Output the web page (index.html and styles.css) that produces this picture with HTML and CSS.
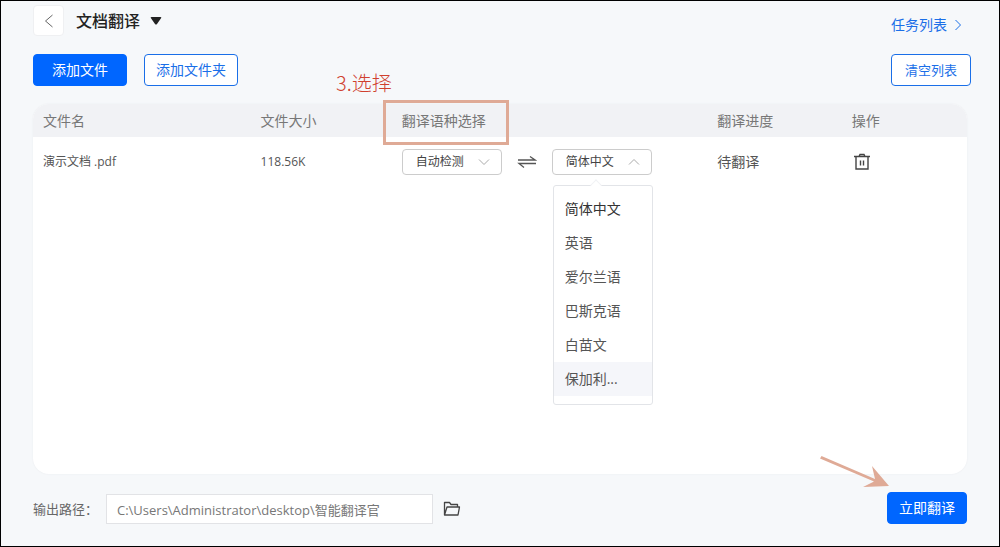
FILE: index.html
```html
<!DOCTYPE html>
<html lang="zh-CN">
<head>
<meta charset="utf-8">
<title>文档翻译</title>
<link rel="stylesheet" href="styles.css">
</head>
<body>
<div class="app">
  <header class="topbar">
    <button class="back" type="button" aria-label="返回">
      <svg width="10" height="14" viewBox="0 0 10 14"><path d="M8.500 1L1.500 7l7 6"/></svg>
    </button>
    <button class="title" type="button">文档翻译
      <svg width="12" height="8" viewBox="0 0 12 8"><path d="M1.500 0h9q1.500 0 .5 1.200L7 7q-1 1.200-2 0L1 1.200Q0 0 1.500 0z"/></svg>
    </button>
    <a class="tasks" href="#">任务列表
      <svg width="8" height="12" viewBox="0 0 8 12"><path d="M1.500 1L6.500 6l-5 5"/></svg>
    </a>
  </header>

  <div class="toolbar">
    <button class="btn btn-primary" type="button">添加文件</button>
    <button class="btn btn-outline" type="button">添加文件夹</button>
    <button class="btn btn-outline btn-clear" type="button">清空列表</button>
    <span class="note">3.选择</span>
  </div>

  <main class="card">
    <table class="files">
      <colgroup><col class="c-name"><col class="c-size"><col class="c-lang"><col class="c-progress"><col class="c-action"></colgroup>
      <thead>
        <tr><th>文件名</th><th>文件大小</th><th class="marked">翻译语种选择</th><th>翻译进度</th><th>操作</th></tr>
      </thead>
      <tbody>
        <tr>
          <td class="small">演示文档 .pdf</td>
          <td class="small">118.56K</td>
          <td>
            <div class="langs">
              <div class="picker">
                <select aria-label="源语言"><option>自动检测</option></select>
                <svg width="12" height="8" viewBox="0 0 12 8"><path d="M1 1.500l5 5 5-5"/></svg>
              </div>
              <svg class="swap" width="20" height="14" viewBox="0 0 20 14"><path d="M1 5h17L13 1.500M19 8.500H2L7 12.500"/></svg>
              <div class="picker">
                <select aria-label="目标语言"><option>简体中文</option></select>
                <svg width="12" height="8" viewBox="0 0 12 8"><path d="M1 6.500l5-5 5 5"/></svg>
                <ul class="menu" role="listbox" aria-label="目标语言">
                  <li role="option" aria-selected="true">简体中文</li>
                  <li role="option">英语</li>
                  <li role="option">爱尔兰语</li>
                  <li role="option">巴斯克语</li>
                  <li role="option">白苗文</li>
                  <li class="hover" role="option">保加利...</li>
                </ul>
              </div>
            </div>
          </td>
          <td>待翻译</td>
          <td>
            <button class="icon" type="button" aria-label="删除">
              <svg width="20" height="20" viewBox="0 0 20 20" stroke-width="1.400"><path d="M2 4.500h16M4 4.500v12.500h12V4.500M7 4.500l1-2h4l1 2M8.500 8.500v5M11.500 8.500v5"/></svg>
            </button>
          </td>
        </tr>
      </tbody>
    </table>
  </main>

  <footer class="footer">
    <label for="path">输出路径：</label>
    <input id="path" type="text" value="C:\Users\Administrator\desktop\智能翻译官">
    <button class="icon" type="button" aria-label="选择文件夹">
      <svg width="18" height="16" viewBox="0 0 18 16" stroke-width="1.300" stroke-linejoin="round"><path d="M1.500 14V1.500H6.500L8 3.500h6.500V6M1.500 14L4 6h12.500L15 14z"/></svg>
    </button>
    <div class="submit">
      <button class="btn btn-primary btn-start" type="button">立即翻译</button>
      <svg class="arrow" width="70" height="34" viewBox="0 0 70 34"><path d="M1.500 0L0 2.500 54 25.500 43 31l26-1L52 10l3 13z"/></svg>
    </div>
  </footer>
</div>
</body>
</html>
```
FILE: styles.css
```css
*, *::before, *::after { box-sizing: border-box; }

body {
  margin: 0;
  font-family: "Open Sans", "Noto Sans CJK SC", sans-serif;
  font-size: 14px;
  line-height: 20px;
  color: #555;
}

button, input, select { font: inherit; color: inherit; }

button {
  padding: 0;
  border: 0;
  background: none;
  cursor: pointer;
}

svg { fill: none; stroke: currentColor; }

.app {
  display: flex;
  flex-direction: column;
  min-height: 100vh;
  padding: 4px 32px 22px;
  border: 1px solid #000;
  background: #f6f8fa;
}

.topbar {
  display: flex;
  align-items: center;
  gap: 12px;
  padding-right: 5px;
}

.back {
  display: grid;
  place-items: center;
  width: 31px;
  height: 31px;
  border: 1px solid #eff0f2;
  border-radius: 4px;
  background: #fff;
  color: #666;
}

.title {
  display: flex;
  align-items: center;
  gap: 10px;
  font-size: 16px;
  font-weight: 500;
  color: #222;
}

.title svg { fill: currentColor; stroke: none; }

.tasks {
  display: flex;
  align-items: center;
  gap: 7px;
  margin: 8px 0 0 auto;
  color: #1a6fe8;
  text-decoration: none;
}

.toolbar {
  position: relative;
  display: flex;
  gap: 17px;
  margin: 18px -4px 18px 0;
}

.btn {
  width: 94px;
  height: 32px;
  border: 1px solid #0066ff;
  border-radius: 4px;
}

.btn-primary { background: #0066ff; color: #fff; }
.btn-outline { border-color: #1a6fe8; background: #fff; color: #1a6fe8; }
.btn-clear { width: 80px; margin-left: auto; font-size: 13px; }
.btn-start { width: 80px; }

.note {
  position: absolute;
  top: 15px;
  left: 303px;
  font-family: "Noto Sans CJK SC", sans-serif;
  font-size: 20px;
  font-weight: 300;
  line-height: 28px;
  color: #d0402e;
}

.card {
  flex: 1;
  border-radius: 16px;
  background: #fff;
  box-shadow: 0 0 2px #e9ebee;
}

.files {
  width: 100%;
  table-layout: fixed;
  border-collapse: separate;
  border-spacing: 0;
}

.c-name { width: 23.3%; }
.c-size { width: 15.1%; }
.c-lang { width: 33.8%; }
.c-progress { width: 14.4%; }
.c-action { width: 13.4%; }

th {
  height: 33px;
  padding: 0 10px;
  background: #f1f2f5;
  font-weight: 400;
  text-align: left;
  color: #777;
}

th:first-child { border-top-left-radius: 16px; }
th:last-child { border-top-right-radius: 16px; }

.marked { position: relative; }

.marked::after {
  content: "";
  position: absolute;
  top: -4px;
  left: -9px;
  width: 126px;
  height: 45px;
  border: 3px solid #dfaa96;
}

td { height: 49px; padding: 0 10px; }

.small { font-size: 12px; }

.langs {
  display: flex;
  align-items: center;
  gap: 15px;
}

.picker {
  position: relative;
  display: grid;
  grid-template-columns: 1fr 24px;
  align-items: center;
  width: 100px;
  color: #aaa;
}

.picker select {
  grid-area: 1 / 1 / 2 / 3;
  height: 26px;
  padding: 0 13px;
  border: 1px solid #ccc;
  border-radius: 4px;
  appearance: none;
  background: #fff;
  font-size: 12px;
  color: #444;
}

.picker > svg { grid-area: 1 / 2; pointer-events: none; }

.swap { color: #555; stroke-width: 1.3px; }

.menu {
  position: absolute;
  top: 36px;
  left: 1px;
  width: 100px;
  margin: 0;
  padding: 6px 0 8px;
  border: 1px solid #e2e4e8;
  border-radius: 3px;
  background: #fff;
  list-style: none;
  color: #555;
}

.menu::before {
  content: "";
  position: absolute;
  top: -5px;
  left: 38px;
  width: 8px;
  height: 8px;
  border: solid #f1f2f5;
  border-width: 1px 0 0 1px;
  background: #fff;
  transform: rotate(45deg);
}

.menu li { padding: 7px 11px; }
.menu .hover { background: #f5f6fa; }
.menu [aria-selected] { color: #333; }

.icon { display: flex; color: #444; }

.footer {
  display: flex;
  align-items: center;
  margin-top: 17px;
}

.footer label {
  width: 73px;
  padding-top: 3px;
  font-size: 13px;
  color: #666;
}

.footer input {
  width: 35%;
  height: 30px;
  margin-top: 3px;
  padding: 0 10px;
  border: 1px solid #e2e3e6;
  background: #fff;
  font-size: 13px;
  color: #777;
}

.footer .icon { margin: 3px 0 0 10px; }

.submit { position: relative; margin-left: auto; }

.arrow {
  position: absolute;
  right: 77px;
  bottom: 34px;
  fill: #dfaa96;
  stroke: none;
}
```
